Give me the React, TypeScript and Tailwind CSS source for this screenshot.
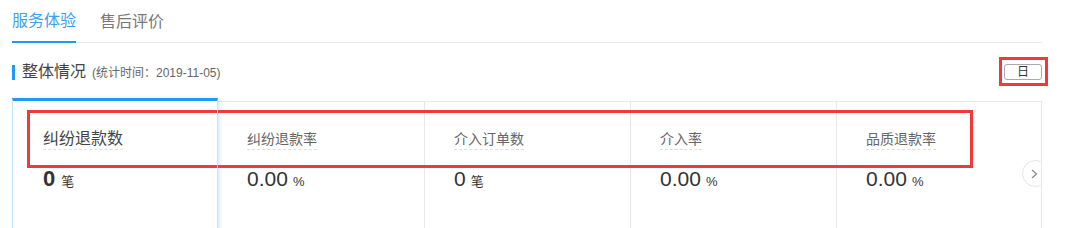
import React from 'react'

type Metric = {
  label: string
  value: string
  unit: string
}

const metrics: Metric[] = [
  { label: '纠纷退款数', value: '0', unit: '笔' },
  { label: '纠纷退款率', value: '0.00', unit: '%' },
  { label: '介入订单数', value: '0', unit: '笔' },
  { label: '介入率', value: '0.00', unit: '%' },
  { label: '品质退款率', value: '0.00', unit: '%' },
]

const font = { fontFamily: '"Liberation Sans", "Noto Sans CJK SC", sans-serif' }

export default function App() {
  return (
    <div className="relative w-[1076px] h-[228px] overflow-hidden bg-white" style={font}>
      {/* Tabs */}
      <div className="ml-[12px] w-[1030px] flex gap-[24px] border-b border-[#e8e8e8] h-[43px]">
        <div className="h-[43px] -mb-px flex items-center border-b-2 border-[#1d9bef] text-[16px] text-[#3a9ff0] pt-[1px]">
          服务体验
        </div>
        <div className="h-[43px] flex items-center text-[16px] text-[#777] pt-[1px]">售后评价</div>
      </div>

      {/* Section title */}
      <div className="ml-[12px] w-[1030px] mt-[16px] h-[26px] flex items-center">
        <div className="w-[3px] h-[15px] bg-[#1d9bef]" />
        <span className="ml-[7px] text-[16px] text-[#444] leading-[20px]">整体情况</span>
        <span className="ml-[6px] text-[12px] text-[#666] leading-[20px] pt-[2px]">(统计时间：2019-11-05)</span>
        <div className="ml-auto w-[38px] h-[16px] border border-[#aaa] rounded-[3px] flex items-center justify-center text-[12px] text-[#333] leading-none">
          日
        </div>
      </div>

      {/* Metric cards */}
      <div className="relative ml-[12px] mt-[13px] w-[1030px] h-[140px] flex">
        {metrics.map((m, i) =>
          i === 0 ? (
            <div
              key={m.label}
              className="relative z-10 w-[206px] h-full border-t-[3px] border-t-[#1d9bef] border-x border-x-[#c5e5fa] shadow-[2px_0_4px_rgba(29,155,239,0.18)] pl-[30px] pt-[26px]"
            >
              <span className="inline-block text-[16px] leading-[20px] text-[#444] border-b border-dashed border-[#ddd]">
                {m.label}
              </span>
              <div className="mt-[16px] leading-[24px] text-[#333]">
                <span className="text-[22px] font-bold">{m.value}</span>
                <span className="ml-[6px] text-[13px]">{m.unit}</span>
              </div>
            </div>
          ) : (
            <div
              key={m.label}
              className={`w-[206px] h-full mt-[3px] border-t border-[#e8e8e8] ${i === 1 ? '' : 'border-l'} ${
                i === 4 ? 'border-r' : ''
              } pl-[29px] pt-[25px]`}
            >
              <span className="inline-block text-[14px] leading-[20px] text-[#666] border-b border-dashed border-[#ddd]">
                {m.label}
              </span>
              <div className="mt-[16px] leading-[24px] text-[#333]">
                <span className="text-[21px]">{m.value}</span>
                <span className="ml-[5px] text-[13px]">{m.unit}</span>
              </div>
            </div>
          )
        )}

        {/* next arrow, cut by the panel edge */}
        <div className="absolute left-[1010px] top-[62px] w-[19px] h-[27px] overflow-hidden">
          <div className="w-[27px] h-[27px] rounded-full border border-[#e3e3e3] bg-white flex items-center pl-[8px]">
            <svg width="7" height="10" viewBox="0 0 7 10" fill="none">
              <path d="M1 1l4.5 4L1 9" stroke="#888" strokeWidth="1.3" />
            </svg>
          </div>
        </div>
      </div>

      {/* red annotation boxes */}
      <div className="absolute left-[27px] top-[110px] w-[946px] h-[58px] border-[3px] border-[#f03a3a]" />
      <div className="absolute left-[999px] top-[57px] w-[49px] h-[29px] border-[3px] border-[#f03a3a]" />
    </div>
  )
}
